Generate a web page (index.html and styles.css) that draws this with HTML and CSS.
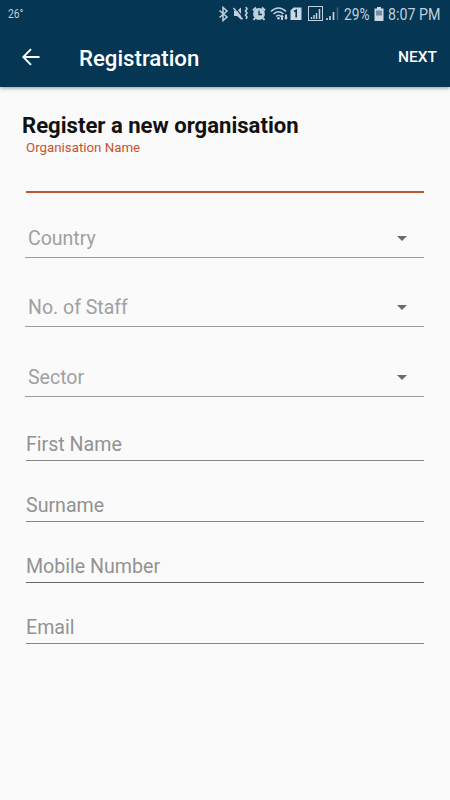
FILE: index.html
```html
<!DOCTYPE html>
<html lang="en">
<head>
<meta charset="utf-8">
<title>Registration</title>
<link rel="stylesheet" href="styles.css">
</head>
<body>
<header class="top">
  <div class="status">
    <span class="temp">26°</span>
    <svg class="status-icons" width="122" height="28" viewBox="218 0 122 28" fill="none" stroke="#bfd0dc">
      <path d="M219.500 10.500l7.500 6.500-4 3.500V7.500l4 3.500-7.500 6.500" stroke-width="1.500"/>
      <path d="M234 11h3l4-3.500v12l-4-3.500h-3z" fill="#bfd0dc" stroke="none"/>
      <path d="M235 7l9 12" stroke="#053653" stroke-width="1.200"/>
      <path d="M233.500 8l9 11.500" stroke-width="1.500"/>
      <path d="M246 7l1 2-1.500 2 1.500 2-1.500 2 1.500 2-1 2" stroke-width="1.600"/>
      <circle cx="259" cy="14" r="5.900" fill="#bfd0dc" stroke="none"/>
      <path d="M253 10.500l3-3M265 10.500l-3-3M255 18l-1.500 2M263 18l1.500 2" stroke-width="2"/>
      <path d="M259 10.500v4h3" stroke="#053653" stroke-width="1.300"/>
      <path d="M271 11.500q7.500-7 15 0M273.500 14q5-4.500 10 0M276 16.500q2.500-2.500 5 0" stroke-width="1.600"/>
      <circle cx="278.500" cy="18.300" r="1.300" fill="#bfd0dc" stroke="none"/>
      <path d="M282 14.500l2 2.500h-1v3h-2v-3h-1zM286 20l-2-2.500h1v-3h2v3h1z" fill="#bfd0dc" stroke="none"/>
      <path d="M293.500 7.500h8V20h-11v-9.500z" fill="#c9d8e2" stroke="none"/>
      <path d="M294 11.500l2.200-1.200V17.500" stroke="#053653" stroke-width="1.600"/>
      <rect x="308.500" y="6.500" width="14" height="14"/>
      <path d="M311.500 19v-2M314 19v-4M316.500 19v-6M319.500 19V9" stroke-width="1.500"/>
      <path d="M327 20v-2M330 20v-4M333.500 20v-8" stroke-width="1.700"/>
      <path d="M337.500 20V7.500" stroke="#456a82" stroke-width="1.500"/>
    </svg>
    <span class="percent">29%</span>
    <svg class="battery" width="10" height="14" viewBox="0 0 10 14">
      <path d="M3 0h4v1.500h2.500V14H.5V1.500H3z" fill="#c9d8e2"/>
      <path d="M2 3.500h6v5H2z" fill="#7390a3"/>
    </svg>
    <span class="clock">8:07 PM</span>
  </div>
  <div class="toolbar">
    <svg class="back" width="20" height="18" viewBox="0 0 20 18" fill="none" stroke="#fff" stroke-width="1.900">
      <path d="M18.500 9H2.500M10 1.200L2.300 9l7.700 7.800"/>
    </svg>
    <h1 class="title">Registration</h1>
    <span class="next">NEXT</span>
  </div>
</header>
<main class="form">
  <h2 class="heading">Register a new organisation</h2>
  <div class="field active"><span class="label">Organisation Name</span></div>
  <div class="field select country"><span>Country</span><i class="caret"></i></div>
  <div class="field select staff"><span>No. of Staff</span><i class="caret"></i></div>
  <div class="field select sector"><span>Sector</span><i class="caret"></i></div>
  <div class="field input first"><span>First Name</span></div>
  <div class="field input"><span>Surname</span></div>
  <div class="field input mobile"><span>Mobile Number</span></div>
  <div class="field input"><span>Email</span></div>
</main>
</body>
</html>
```
FILE: styles.css
```css
* { box-sizing: border-box; }
body {
  margin: 0;
  height: 800px;
  overflow: hidden;
  background: #fafafa;
  font-family: Roboto, "Liberation Sans", sans-serif;
}
.top {
  height: 87px;
  background: #053653;
  box-shadow: 0 1px 4px rgba(0, 0, 0, .4);
}
.status {
  display: flex;
  align-items: center;
  height: 28px;
  color: #bfd0dc;
  white-space: nowrap;
}
.status span { transform-origin: left center; }
.temp { width: 210px; margin: -2px 0 0 8px; font-size: 13px; transform: scaleX(.79); }
.status-icons { flex: none; }
.percent { width: 34px; margin-left: 4px; font-size: 16px; transform: scaleX(.86); }
.battery { flex: none; margin-left: -4px; }
.clock { margin-left: 4px; font-size: 16px; transform: scaleX(.89); }
.toolbar {
  display: flex;
  align-items: center;
  height: 59px;
  padding: 0 13px 0 21px;
  color: #fff;
}
.back { flex: none; margin-top: -2px; }
.title { margin: 0 0 0 38px; font-size: 22.2px; line-height: 30px; font-weight: 500; }
.next { margin: -1px 0 0 auto; font-size: 15.5px; font-weight: 500; }
.form { padding: 24px 26px 0; }
.heading {
  margin: 0 0 1px -4px;
  font-size: 22.1px;
  line-height: 28px;
  font-weight: 700;
  color: #111;
  white-space: nowrap;
}
.field {
  display: flex;
  align-items: flex-end;
  border-bottom: 1px solid #999;
  font-size: 19.6px;
  line-height: 24px;
  color: #929292;
}
.active {
  align-items: flex-start;
  height: 53px;
  border-bottom: 2px solid #b95a31;
}
.label { font-size: 13.3px; line-height: 15px; color: #c4532e; }
.select {
  justify-content: space-between;
  height: 69px;
  margin-left: -1px;
  padding: 0 17px 6px 3px;
  color: #a0a0a0;
  font-size: 19.5px;
}
.country { height: 65px; }
.sector { height: 70px; }
.caret {
  border: 5.5px solid transparent;
  border-top-color: #6b6b6b;
  border-bottom: 0;
  margin-bottom: 10px;
}
.input { height: 61px; padding-bottom: 3px; border-bottom-color: #858585; }
.first { height: 64px; }
.mobile { border-bottom-color: #666; }
```
